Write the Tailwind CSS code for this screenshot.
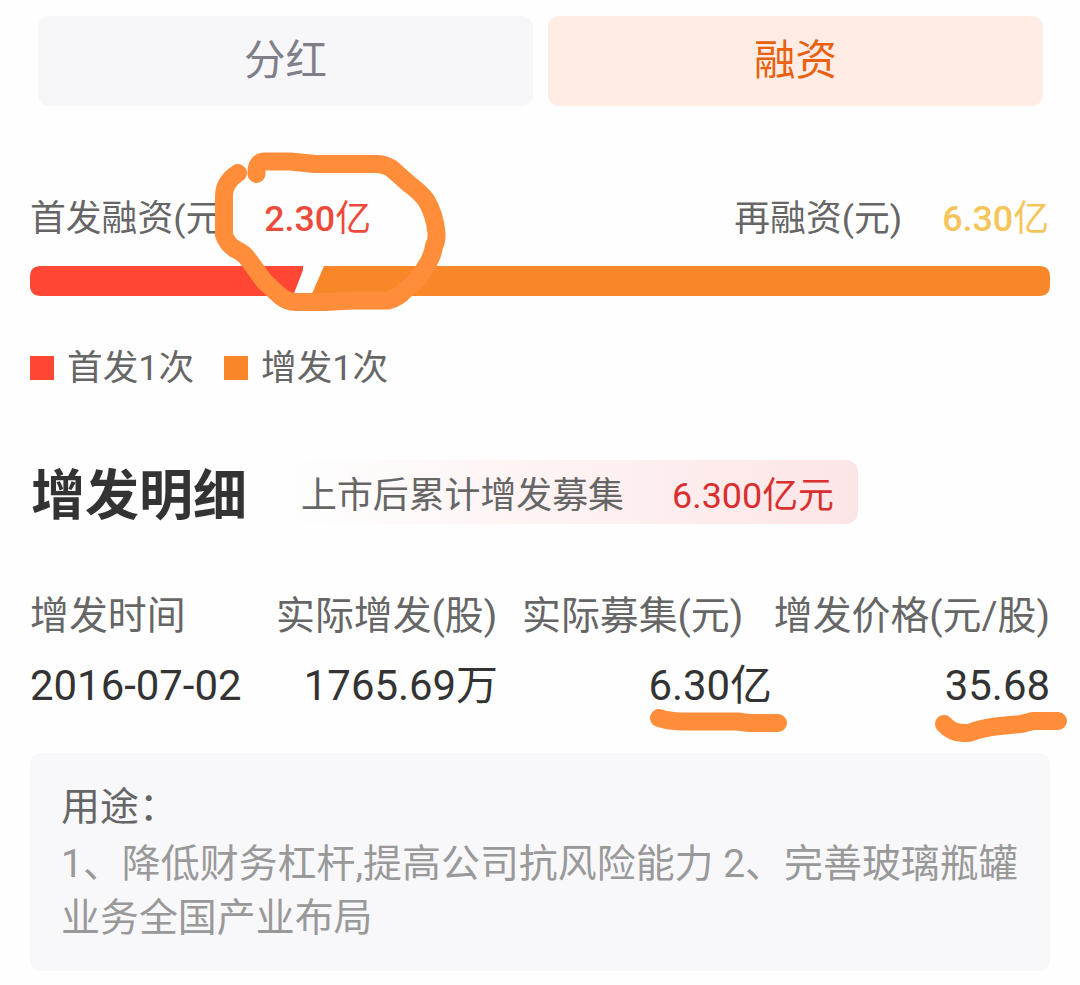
<!DOCTYPE html>
<html lang="zh-CN">
<head>
<meta charset="utf-8">
<title>融资</title>
<script src="https://cdn.jsdelivr.net/npm/@tailwindcss/browser@4"></script>
</head>
<body class="bg-white">
<main class="relative flex h-[985px] w-[1080px] flex-col overflow-hidden bg-[#fefefe] px-[30px] pt-4 font-[Roboto,'Noto_Sans_CJK_SC',sans-serif] text-[#666666]">
  <nav class="flex h-[90px] gap-[15px] pr-[7px] pl-2 text-[41.5px] leading-[89px]">
    <div class="flex-1 rounded-[11px] bg-[#f7f7fa] text-center text-[#7f7f89]">分红</div>
    <div class="flex-1 rounded-[11px] bg-[#ffede5] text-center text-[#e9600f]">融资</div>
  </nav>

  <section class="mt-[89px] flex h-[48px] justify-between text-[35.8px] leading-[48px]">
    <div class="flex w-[341px] justify-between"><span>首发融资(元)</span><span class="text-[#ec4b3b]"><b class="font-medium">2.30</b>亿</span></div>
    <div class="flex gap-[40px] pr-px"><span>再融资(元)</span><span class="text-[#f5c55a]"><b class="font-medium">6.30</b>亿</span></div>
  </section>
  <svg class="mt-[23px] h-[30px] w-[1020px] shrink-0" viewBox="0 0 1020 30">
    <path fill="#ff4733" d="M11 0H273V4L263 30H11Q0 30 0 19V11Q0 0 11 0Z"/>
    <path fill="#f98629" d="M294 0H1009Q1020 0 1020 11V19Q1020 30 1009 30H281Z"/>
  </svg>
  <div class="mt-[48px] flex h-[48px] items-center text-[35.7px] leading-[48px]">
    <i class="mb-px size-6 bg-[#ff4733]"></i><span class="ml-[13px] w-[157px]">首发1次</span>
    <i class="mb-px size-6 bg-[#f98629]"></i><span class="ml-[13px]">增发1次</span>
  </div>

  <header class="mt-[68px] flex h-16 items-center">
    <h1 class="w-[258px] pt-[9px] pl-px text-[54px] leading-[64px] font-bold text-[#333333]">增发明细</h1>
    <div class="flex h-16 w-[570px] justify-between rounded-r-xl bg-linear-to-r from-[#fefefe] to-[#fde5e6] pr-6 pl-[13px] text-[35.9px] leading-[72px]"><span>上市后累计增发募集</span><span class="text-[#d92f2f]">6.300亿元</span></div>
  </header>

  <div class="mt-[67px] flex h-[50px] text-[38.9px] leading-[50px] whitespace-nowrap">
    <span class="w-[246px]">增发时间</span><span class="w-[246px]">实际增发(股)</span><span class="w-[220px]">实际募集(元)</span><span class="flex flex-1 justify-end">增发价格(元/股)</span>
  </div>
  <div class="mt-[19px] flex h-[52px] text-[41.9px] leading-[52px] text-[#333333]">
    <span class="w-[232px]">2016-07-02</span><span class="w-[236px] text-right">1765.69万</span><span class="w-[274px] text-right">6.30亿</span><span class="flex-1 text-right">35.68</span>
  </div>

  <section class="mt-[41px] h-[218px] rounded-[11px] bg-[#f8f8fb] pt-[27px] pl-[31px] text-[38.95px] leading-[54px] text-[#999999]">
    <p class="h-[57px] text-[#666666]">用途：</p>
    <p class="whitespace-nowrap">1、降低财务杠杆,提高公司抗风险能力 2、完善玻璃瓶罐<br>业务全国产业布局</p>
  </section>

  <svg class="pointer-events-none absolute inset-0 h-[985px] w-[1080px]" viewBox="0 0 1080 985" fill="none" stroke="#ff8d3a" stroke-width="18" stroke-linecap="round" stroke-linejoin="round">
    <path d="M238 173Q224 182 224 196V235Q227 244 235 249Q244 253 248 259L264 281L280 296Q288 302 295 302H325L352 300.500H388Q398 298 405 290Q418 281 425 268Q433 256 434 246Q437 241 436.500 233Q435 215 426 200Q420 192 409 184L391 168Q384 164 376 164H315L290 161.500H264Q256 162 256.500 174"/>
    <path d="M659 718Q668 721 681 721.500H737L750 723H778"/>
    <path d="M944 724Q952 733 963 733H969Q981 728 1000 726L1021 724L1033 721H1058"/>
  </svg>
</main>
</body>
</html>
